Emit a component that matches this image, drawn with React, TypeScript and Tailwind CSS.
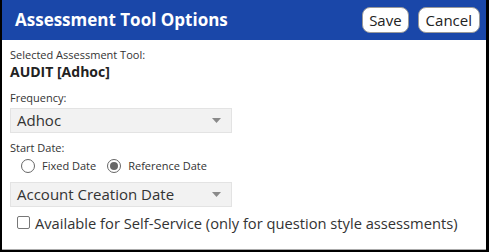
import React, { useState } from 'react';

const font = { fontFamily: '"Open Sans", "Noto Sans", sans-serif' };

function Caret() {
  return (
    <svg width="9" height="5" viewBox="0 0 9 5" className="shrink-0">
      <path d="M0 0 H9 L4.5 5 Z" fill="#8a8a8a" />
    </svg>
  );
}

function SelectBox({ value }: { value: string }) {
  return (
    <div className="flex h-[25px] w-[222px] items-center justify-between border border-[#e3e3e3] bg-[#f2f2f2] pl-[6px] pr-[10px] text-[15px] text-[#333]">
      <span>{value}</span>
      <Caret />
    </div>
  );
}

function Radio({ checked, label }: { checked: boolean; label: string }) {
  return (
    <label className="flex items-center gap-[7px]">
      <span className="flex h-[14px] w-[14px] items-center justify-center rounded-full border border-[#666] bg-white">
        {checked && <span className="h-[8px] w-[8px] rounded-full bg-[#666]" />}
      </span>
      <span>{label}</span>
    </label>
  );
}

export default function App() {
  const [selfService, setSelfService] = useState(false);

  return (
    <div className="h-[252px] w-[489px] bg-black" style={font}>
      <div className="ml-[2px] flex h-[250px] w-[484px] flex-col bg-white">
        {/* header */}
        <div className="flex h-[40px] items-center justify-between bg-[#1a47a9] pl-[13px] pr-[6px]">
          <h1 className="text-[17px] font-bold text-white">Assessment Tool Options</h1>
          <div className="flex gap-[9px]">
            <button className="h-[26px] rounded-[8px] border border-[#999] bg-white px-[6px] text-[15px] text-[#222]">
              Save
            </button>
            <button className="h-[26px] rounded-[8px] border border-[#999] bg-white px-[7px] text-[15px] text-[#222]">
              Cancel
            </button>
          </div>
        </div>

        {/* body */}
        <div className="flex flex-1 flex-col px-[8px] pt-[7px] text-[#333]">
          <div className="text-[11px] leading-[15px]">Selected Assessment Tool:</div>
          <div className="text-[14px] font-bold leading-[20px] text-[#222]">AUDIT [Adhoc]</div>
          <div className="mt-[8px] text-[11px] leading-[15px]">Frequency:</div>
          <div className="mt-[3px]">
            <SelectBox value="Adhoc" />
          </div>
          <div className="mt-[7px] text-[11px] leading-[15px]">Start Date:</div>
          <div className="mt-[3px] flex gap-[11px] pl-[11px] text-[11px]">
            <Radio checked={false} label="Fixed Date" />
            <Radio checked label="Reference Date" />
          </div>
          <div className="mt-[7px]">
            <SelectBox value="Account Creation Date" />
          </div>
          <label
            className="mt-[5px] flex items-center gap-[5px] pl-[7px] text-[14.7px]"
            onClick={() => setSelfService(!selfService)}
          >
            <span className="flex h-[13px] w-[13px] items-center justify-center rounded-[2px] border border-[#777] bg-white text-[10px] leading-none">
              {selfService ? '✓' : ''}
            </span>
            <span>Available for Self-Service (only for question style assessments)</span>
          </label>
        </div>
        <div className="h-[1px] bg-[#aaa]" />
      </div>
    </div>
  );
}
